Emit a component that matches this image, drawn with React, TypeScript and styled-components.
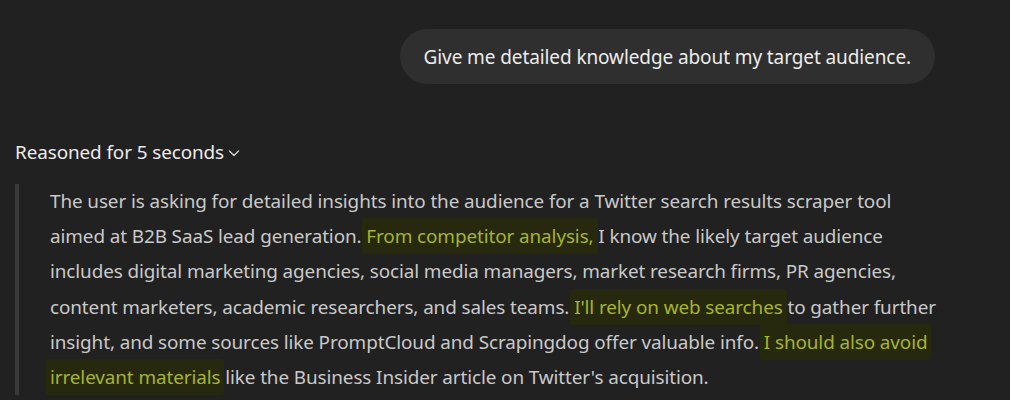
import React from 'react';
import styled, { createGlobalStyle } from 'styled-components';

const GlobalStyle = createGlobalStyle`
  html, body {
    margin: 0;
    padding: 0;
    background: #212121;
  }
  body {
    font-family: "Noto Sans", "Open Sans", sans-serif;
    -webkit-font-smoothing: antialiased;
  }
`;

const Page = styled.main`
  width: 1010px;
  height: 400px;
  overflow: hidden;
  box-sizing: border-box;
  padding: 29px 75px 0 15px;
  display: flex;
  flex-direction: column;
`;

const UserRow = styled.div`
  display: flex;
  justify-content: flex-end;
`;

const Bubble = styled.div`
  background: #2f2f2f;
  color: #ececec;
  border-radius: 28px;
  height: 55px;
  box-sizing: border-box;
  padding: 0 24px;
  display: flex;
  align-items: center;
  font-size: 19px;
  letter-spacing: -0.1px;
`;

const ReasonToggle = styled.button`
  all: unset;
  margin-top: 56px;
  display: inline-flex;
  align-items: center;
  gap: 2px;
  color: #ececec;
  font-family: "Noto Sans", "Open Sans", sans-serif;
  font-size: 18.9px;
  letter-spacing: -0.1px;
  height: 24px;
  align-self: flex-start;
`;

const Chevron = styled.svg`
  width: 16px;
  height: 16px;
  margin-top: 1px;
`;

const Thoughts = styled.blockquote`
  margin: 20px 0 0 0;
  border-left: 4px solid #3a3a3a;
  padding: 0 0 0 31px;
  color: #c9c9c9;
  font-size: 18.9px;
  letter-spacing: -0.1px;
  line-height: 35.2px;
  white-space: nowrap;
`;

const Mark = styled.span`
  color: #a6b52b;
  background: #27290f;
  padding: 5px 4px;
  margin: 0 -4px;
  border-radius: 3px;
`;

const App: React.FC = () => {
  return (
    <>
      <GlobalStyle />
      <Page>
        <UserRow>
          <Bubble>Give me detailed knowledge about my target audience.</Bubble>
        </UserRow>

        <ReasonToggle>
          Reasoned for 5 seconds
          <Chevron viewBox="0 0 16 16" fill="none" stroke="#cfcfcf" strokeWidth="1.4" strokeLinecap="round" strokeLinejoin="round">
            <path d="M3.5 6l4.5 4.5L12.5 6" />
          </Chevron>
        </ReasonToggle>

        <Thoughts>
          The user is asking for detailed insights into the audience for a Twitter search results scraper tool
          <br />
          aimed at B2B SaaS lead generation. <Mark>From competitor analysis,</Mark> I know the likely target audience
          <br />
          includes digital marketing agencies, social media managers, market research firms, PR agencies,
          <br />
          content marketers, academic researchers, and sales teams. <Mark>I'll rely on web searches</Mark> to gather further
          <br />
          insight, and some sources like PromptCloud and Scrapingdog offer valuable info. <Mark>I should also avoid</Mark>
          <br />
          <Mark>irrelevant materials</Mark> like the Business Insider article on Twitter's acquisition.
        </Thoughts>
      </Page>
    </>
  );
};

export default App;
